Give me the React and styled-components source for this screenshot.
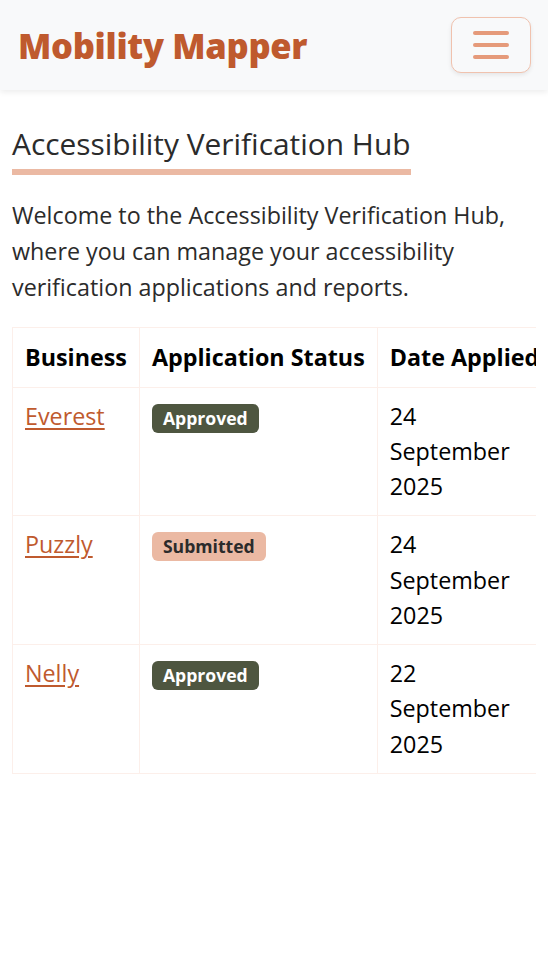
import React from "react";
import styled, { createGlobalStyle } from "styled-components";

const Global = createGlobalStyle`
  html, body { margin: 0; padding: 0; background: #fff; }
  body { font-family: "Open Sans", "Noto Sans", sans-serif; color: #212529; }
  * { box-sizing: border-box; }
`;

const Header = styled.header`
  height: 90px;
  background: #f8f9fa;
  box-shadow: 0 2px 6px rgba(0, 0, 0, 0.08);
  display: flex;
  align-items: center;
  justify-content: space-between;
  padding: 0 17px 0 18px;
`;

const Brand = styled.a`
  font-size: 34.5px;
  font-weight: 800;
  color: #bf5a2e;
  text-decoration: none;
  letter-spacing: -0.3px;
`;

const MenuButton = styled.button`
  width: 80px;
  height: 56px;
  border: 1px solid #f0c2ae;
  border-radius: 10px;
  background: #f8f9fa;
  box-shadow: 0 2px 4px rgba(0, 0, 0, 0.08);
  display: flex;
  align-items: center;
  justify-content: center;
  padding: 0;
`;

const Main = styled.main`
  padding: 36px 12px 0;
`;

const Title = styled.h1`
  display: inline-block;
  margin: 0;
  font-size: 29.9px;
  font-weight: 400;
  line-height: 1.2;
  color: #2b2b2b;
  padding-bottom: 7px;
  border-bottom: 6px solid #ebb9a3;
`;

const Intro = styled.p`
  margin: 22px 0 22px;
  font-size: 23.3px;
  line-height: 36px;
  color: #2b2b2b;
`;

const TableWrap = styled.div`
  width: 524px;
  overflow: hidden;
`;

const Table = styled.table`
  border-collapse: collapse;
  width: min-content;
  font-size: 23.3px;
`;

const Th = styled.th`
  text-align: left;
  font-weight: 700;
  white-space: nowrap;
  padding: 12px 12px;
  line-height: 35px;
  border: 1px solid #fcefea;
  color: #000;
`;

const Td = styled.td`
  vertical-align: top;
  padding: 11px 12px 11px;
  line-height: 35.2px;
  border: 1px solid #fcefea;
  color: #000;
`;

const BizLink = styled.a`
  color: #bf5a2e;
  text-decoration: underline;
  text-underline-offset: 3px;
`;

const Badge = styled.span`
  display: inline-block;
  margin-top: 5px;
  padding: 0 11px;
  height: 29px;
  line-height: 29px;
  border-radius: 6px;
  font-size: 17.6px;
  font-weight: 700;
  background: ${(p) => (p.$status === "Approved" ? "#4e5640" : "#ebb9a3")};
  color: ${(p) => (p.$status === "Approved" ? "#fff" : "#2b2b2b")};
  vertical-align: top;
`;

const rows = [
  { name: "Everest", status: "Approved", date: "24 September 2025" },
  { name: "Puzzly", status: "Submitted", date: "24 September 2025" },
  { name: "Nelly", status: "Approved", date: "22 September 2025" },
];

function Hamburger() {
  return (
    <svg width="38" height="30" viewBox="0 0 38 30">
      <g stroke="#e59a7a" strokeWidth="4" strokeLinecap="round">
        <line x1="3" y1="3" x2="35" y2="3" />
        <line x1="3" y1="15" x2="35" y2="15" />
        <line x1="3" y1="27" x2="35" y2="27" />
      </g>
    </svg>
  );
}

export default function App() {
  return (
    <>
      <Global />
      <Header>
        <Brand href="#">Mobility Mapper</Brand>
        <MenuButton aria-label="Toggle navigation">
          <Hamburger />
        </MenuButton>
      </Header>
      <Main>
        <Title>Accessibility Verification Hub</Title>
        <Intro>
          Welcome to the Accessibility Verification Hub, where you can manage your
          accessibility verification applications and reports.
        </Intro>
        <TableWrap>
          <Table>
            <thead>
              <tr>
                <Th>Business</Th>
                <Th>Application Status</Th>
                <Th>Date Applied</Th>
              </tr>
            </thead>
            <tbody>
              {rows.map((r) => (
                <tr key={r.name}>
                  <Td>
                    <BizLink href="#">{r.name}</BizLink>
                  </Td>
                  <Td>
                    <Badge $status={r.status}>{r.status}</Badge>
                  </Td>
                  <Td>{r.date}</Td>
                </tr>
              ))}
            </tbody>
          </Table>
        </TableWrap>
      </Main>
    </>
  );
}
